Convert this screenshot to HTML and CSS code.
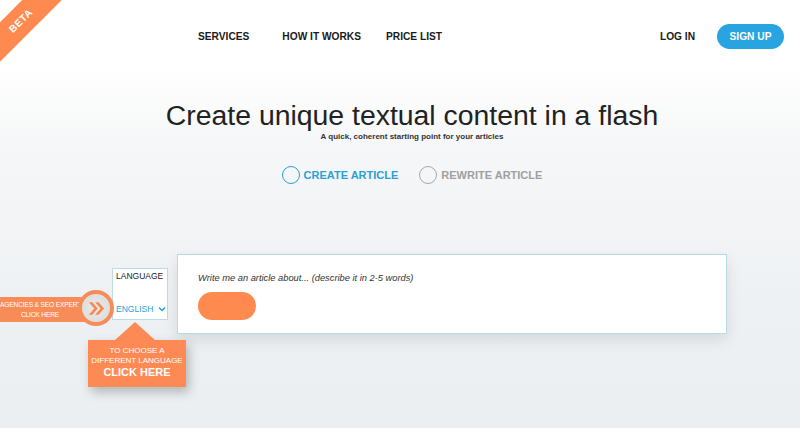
FILE: index.html
```html
<!DOCTYPE html>
<html>
<head>
<meta charset="utf-8">
<link rel="stylesheet" href="styles.css">
</head>
<body>
<div class="beta">BETA</div>
<header class="header">
  <nav class="nav">
    <a class="nav-item nav-services">SERVICES</a>
    <a class="nav-item nav-how">HOW IT WORKS</a>
    <a class="nav-item nav-price">PRICE LIST</a>
  </nav>
  <div class="auth">
    <a class="login">LOG IN</a>
    <a class="signup">SIGN UP</a>
  </div>
</header>
<section class="hero">
  <h1 class="title">Create unique textual content in a flash</h1>
  <p class="subtitle">A quick, coherent starting point for your articles</p>
  <div class="modes">
    <label class="mode mode-active"><span class="radio"></span>CREATE ARTICLE</label>
    <label class="mode mode-inactive"><span class="radio"></span>REWRITE ARTICLE</label>
  </div>
</section>
<section class="tool">
  <div class="lang">
    <div class="lang-label">LANGUAGE</div>
    <div class="lang-value">ENGLISH <svg class="chev" width="8" height="6" viewBox="0 0 8 6"><path d="M1 1.5 L4 4.5 L7 1.5" fill="none" stroke="#2b9fd6" stroke-width="1.5"/></svg></div>
  </div>
  <div class="card">
    <div class="prompt">Write me an article about... (describe it in 2-5 words)</div>
    <button class="go"></button>
  </div>
</section>
<div class="agency">
  <div class="agency-text">AGENCIES &amp; SEO EXPERTS<br>CLICK HERE</div>
</div>
<div class="agency-btn">
  <svg width="18" height="15" viewBox="0 0 20 16"><path d="M2 1 L8 8 L2 15 H6 L12 8 L6 1 Z M9 1 L15 8 L9 15 H13 L19 8 L13 1 Z" fill="#f58a56"/></svg>
</div>
<div class="callout">
  <div class="callout-small">TO CHOOSE A<br>DIFFERENT LANGUAGE</div>
  <div class="callout-big">CLICK HERE</div>
</div>
</body>
</html>
```
FILE: styles.css
```css
html, body {
  margin: 0;
  padding: 0;
}
body {
  width: 800px;
  height: 428px;
  overflow: hidden;
  position: relative;
  font-family: "Liberation Sans", Arial, sans-serif;
  background: linear-gradient(to bottom, #ffffff 0px, #ffffff 70px, #f6f7f8 140px, #eef1f3 300px, #eceff1 428px);
  color: #222;
}
a { text-decoration: none; cursor: pointer; }

.beta {
  position: absolute;
  left: -31px;
  top: 7px;
  width: 104px;
  height: 28px;
  line-height: 28px;
  background: #ff8a50;
  color: #fff;
  font-weight: bold;
  font-size: 10px;
  letter-spacing: 0.5px;
  text-align: center;
  transform: rotate(-45deg);
}

.header {
  display: flex;
  align-items: center;
  height: 74px;
  box-sizing: border-box;
  padding-bottom: 2px;
}
.nav {
  display: flex;
  margin-left: 198px;
}
.nav-item {
  font-size: 10.2px;
  font-weight: bold;
  color: #1a1a1a;
}
.nav-how { margin-left: 33px; }
.nav-price { margin-left: 25px; }
.auth {
  display: flex;
  align-items: center;
  margin-left: auto;
  margin-right: 16px;
}
.login {
  font-size: 10.2px;
  font-weight: bold;
  color: #1a1a1a;
  margin-right: 22px;
}
.signup {
  display: block;
  width: 67px;
  height: 25px;
  line-height: 25px;
  border-radius: 13px;
  background: #28a4e0;
  color: #fff;
  font-size: 10.2px;
  font-weight: bold;
  text-align: center;
}

.hero {
  text-align: center;
  padding-left: 24px;
}
.title {
  margin: 24px 0 0;
  font-size: 28.4px;
  font-weight: normal;
  line-height: 34px;
  color: #222;
}
.subtitle {
  margin: -1px 0 0;
  font-size: 8px;
  font-weight: bold;
  color: #333;
  line-height: 12px;
}
.modes {
  display: flex;
  justify-content: center;
  margin-top: 23px;
}
.mode {
  display: flex;
  align-items: center;
  font-size: 11px;
  font-weight: bold;
}
.mode + .mode { margin-left: 21px; }
.radio {
  width: 16px;
  height: 16px;
  border-radius: 50%;
  margin-right: 4px;
  box-sizing: content-box;
}
.mode-active { color: #2b9fd6; }
.mode-active .radio { border: 1.5px solid #2b9fd6; }
.mode-inactive { color: #a0a0a0; }
.mode-inactive .radio { border: 1.5px solid #a8a8a8; }

.tool {
  display: flex;
  align-items: flex-start;
  padding-left: 112px;
  margin-top: 70px;
}
.lang {
  margin-top: 14px;
  width: 56px;
  height: 52px;
  box-sizing: border-box;
  background: #fff;
  border: 1px solid #bcdbe7;
  display: flex;
  flex-direction: column;
  justify-content: space-between;
  padding: 2px 0 5px 3px;
}
.lang-label {
  font-size: 8.5px;
  color: #222;
}
.lang-value {
  font-size: 8.5px;
  color: #2b9fd6;
  display: flex;
  align-items: center;
}
.chev { margin-left: 5px; }
.card {
  margin-left: 9px;
  width: 550px;
  height: 80px;
  box-sizing: border-box;
  background: #fff;
  border: 1px solid #b8dae7;
  box-shadow: 0 6px 14px rgba(0, 0, 0, 0.10);
  padding: 18px 20px 0;
}
.prompt {
  font-size: 9.3px;
  font-style: italic;
  color: #333;
}
.go {
  display: block;
  margin-top: 9px;
  width: 58px;
  height: 28px;
  border: none;
  border-radius: 14px;
  background: #ff8a50;
}

.agency {
  position: absolute;
  left: 0;
  top: 297px;
  width: 90px;
  height: 25px;
  background: #f78c59;
}
.agency-text {
  position: absolute;
  left: 0;
  top: 3px;
  width: 80px;
  color: #fff;
  font-size: 6.7px;
  letter-spacing: -0.2px;
  line-height: 10px;
  text-align: center;
  white-space: nowrap;
}
.agency-btn {
  position: absolute;
  left: 78px;
  top: 290px;
  width: 28px;
  height: 28px;
  border-radius: 50%;
  border: 4px solid #f78c59;
  background: radial-gradient(circle, #ebebeb 0%, #dedede 68%, #ffffff 78%, #d0d0d0 100%);
  display: flex;
  align-items: center;
  justify-content: center;
  box-sizing: content-box;
}

.callout {
  position: absolute;
  left: 88px;
  top: 340px;
  width: 98px;
  height: 47px;
  background: #fd8a55;
  box-shadow: 3px 5px 10px rgba(0, 0, 0, 0.25);
  color: #fff;
  text-align: center;
  padding-top: 6px;
  box-sizing: border-box;
}
.callout::before {
  content: "";
  position: absolute;
  left: 27px;
  top: -18px;
  border-left: 20px solid transparent;
  border-right: 20px solid transparent;
  border-bottom: 18px solid #fd8a55;
}
.callout-small {
  font-size: 8px;
  line-height: 10px;
}
.callout-big {
  font-size: 11px;
  font-weight: bold;
  line-height: 13px;
}
```
